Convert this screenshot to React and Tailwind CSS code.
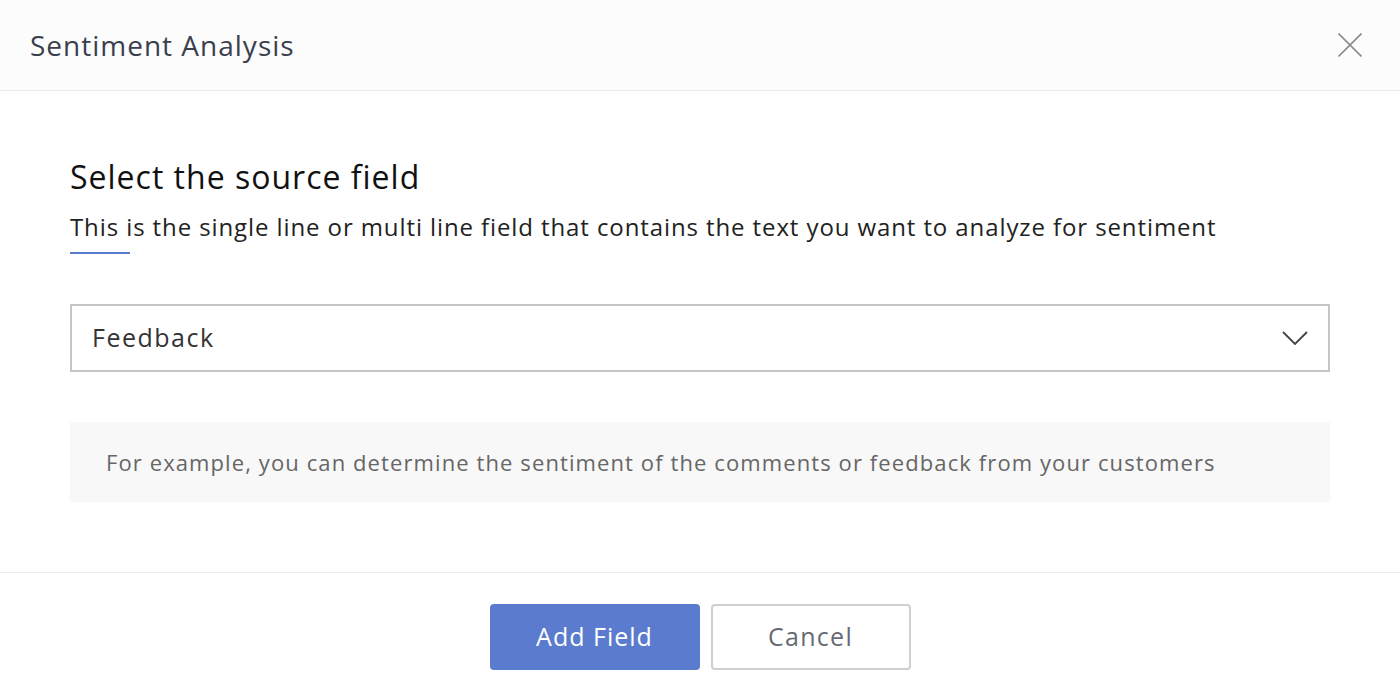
import React from "react";

const App = () => {
  return (
    <div
      className="w-[1400px] h-[700px] bg-white flex flex-col overflow-hidden"
      style={{ fontFamily: "'Open Sans', Lato, sans-serif" }}
    >
      {/* Header */}
      <div className="h-[91px] flex items-center justify-between pl-[30px] pr-[38px] bg-[#fcfcfd] border-b border-[#ececef]">
        <h1 className="text-[28px] tracking-[1px] text-[#3b3f4d]">Sentiment Analysis</h1>
        <button className="w-[24px] h-[24px] text-[#8b8b8b]">
          <svg viewBox="0 0 24 24" className="w-[24px] h-[24px]" stroke="currentColor" strokeWidth="1.6" fill="none">
            <path d="M0.5 0.5 L23.5 23.5 M23.5 0.5 L0.5 23.5" />
          </svg>
        </button>
      </div>

      {/* Body */}
      <div className="flex-1 px-[70px] pt-[66px]">
        <h2 className="text-[32px] leading-[40px] tracking-[1px] text-[#111111]">Select the source field</h2>
        <p className="mt-[16px] text-[24px] leading-[28px] tracking-[0.9px] text-[#222222]">
          This is the single line or multi line field that contains the text you want to analyze for sentiment
        </p>
        <div className="mt-[11px] w-[60px] h-[2px] bg-[#5b7bd0]" />

        <div className="mt-[50px] h-[68px] border-2 border-[#c4c4c9] flex items-center justify-between pl-[20px] pr-[20px]">
          <span className="text-[25px] tracking-[1.5px] text-[#333333]">Feedback</span>
          <svg viewBox="0 0 26 14" className="w-[26px] h-[14px]" stroke="#444444" strokeWidth="1.8" fill="none">
            <path d="M1 1 L13 13 L25 1" />
          </svg>
        </div>

        <div className="mt-[50px] h-[80px] bg-[#f8f8f8] flex items-center pl-[36px]">
          <span className="text-[22px] tracking-[1.1px] text-[#666666]">
            For example, you can determine the sentiment of the comments or feedback from your customers
          </span>
        </div>
      </div>

      {/* Footer */}
      <div className="h-[128px] border-t border-[#ececef] flex justify-center gap-[11px] pt-[31px]">
        <button className="w-[210px] h-[66px] rounded-[4px] bg-[#5a7bce] text-white text-[25px] tracking-[1px]">Add Field</button>
        <button className="w-[200px] h-[66px] rounded-[4px] border-2 border-[#cfcfcf] bg-white text-[#666a73] text-[25px] tracking-[1.3px]">Cancel</button>
      </div>
    </div>
  );
};

export default App;
